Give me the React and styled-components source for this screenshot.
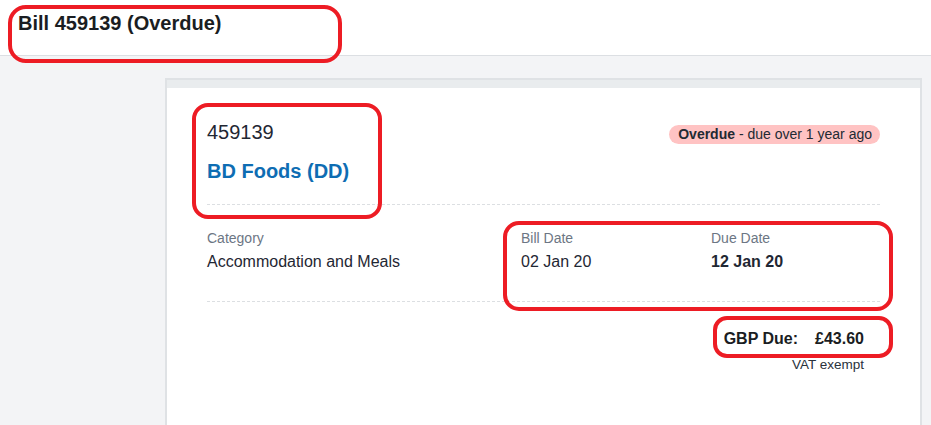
import React from "react";
import styled, { createGlobalStyle } from "styled-components";

const Global = createGlobalStyle`
  html, body { margin: 0; padding: 0; }
  body {
    background: #f3f4f6;
    font-family: "Liberation Sans", Arial, sans-serif;
    color: #1f2733;
  }
  * { box-sizing: border-box; }
`;

const Page = styled.div`
  position: relative;
  width: 931px;
  min-height: 425px;
  overflow: hidden;
`;

const Header = styled.header`
  height: 56px;
  background: #fff;
  border-bottom: 1px solid #dcdfe3;
  padding: 12px 18px 0;
`;

const Title = styled.h1`
  margin: 0;
  font-size: 20px;
  line-height: 23px;
  font-weight: 700;
  color: #1a1d22;
`;

const Main = styled.main`
  padding: 22px 9px 0 165px;
`;

const Card = styled.section`
  background: #fff;
  border: 2px solid #dfe2e5;
  border-bottom: none;
  min-height: 360px;
`;

const Band = styled.div`
  height: 8px;
  background: #e9ecee;
`;

const Body = styled.div`
  padding: 0 40px;
`;

const Section = styled.div`
  padding: ${(p) => p.$pad};
  border-bottom: ${(p) => (p.$dashed ? "1px dashed #dcdfe2" : "none")};
`;

const HeadRow = styled.div`
  display: flex;
  justify-content: space-between;
  align-items: flex-start;
`;

const Number = styled.div`
  font-size: 20px;
  line-height: 24px;
  color: #1f2733;
`;

const Supplier = styled.a`
  display: block;
  margin-top: 15px;
  font-size: 20px;
  line-height: 24px;
  font-weight: 700;
  color: #0e6db3;
  text-decoration: none;
`;

const Badge = styled.span`
  margin-top: 5px;
  display: inline-block;
  height: 19px;
  line-height: 19px;
  padding: 0 8px 0 9px;
  border-radius: 10px;
  background: #ffc3c3;
  font-size: 14px;
  color: #222a33;
  white-space: nowrap;
  b { font-weight: 700; }
`;

const Grid = styled.div`
  display: grid;
  grid-template-columns: 314px 190px 1fr;
`;

const Field = styled.div`
  display: flex;
  flex-direction: column;
  gap: 5px;
`;

const Label = styled.span`
  font-size: 14px;
  line-height: 17px;
  color: #6c7684;
`;

const Value = styled.span`
  font-size: 16px;
  line-height: 19px;
  font-weight: ${(p) => (p.$bold ? 700 : 400)};
  color: #1f2733;
`;

const Totals = styled.div`
  display: flex;
  flex-direction: column;
  align-items: flex-end;
  padding: 27px 16px 0 0;
`;

const DueLine = styled.div`
  font-size: 16px;
  line-height: 19px;
  font-weight: 700;
  color: #1a1d22;
  display: flex;
  gap: 17px;
`;

const Note = styled.div`
  margin-top: 8px;
  font-size: 13.5px;
  line-height: 17px;
  color: #2a323c;
`;

const Mark = styled.div`
  position: absolute;
  left: ${(p) => p.$x}px;
  top: ${(p) => p.$y}px;
  width: ${(p) => p.$w}px;
  height: ${(p) => p.$h}px;
  border: 4px solid #ed1c24;
  border-radius: ${(p) => p.$r || 16}px;
  pointer-events: none;
`;

export default function App() {
  return (
    <Page>
      <Global />
      <Header>
        <Title>Bill 459139 (Overdue)</Title>
      </Header>
      <Main>
        <Card>
          <Band />
          <Body>
            <Section $pad="32px 0 21px" $dashed>
              <HeadRow>
                <div>
                  <Number>459139</Number>
                  <Supplier href="#">BD Foods (DD)</Supplier>
                </div>
                <Badge>
                  <b>Overdue</b> - due over 1 year ago
                </Badge>
              </HeadRow>
            </Section>
            <Section $pad="25px 0 30px" $dashed>
              <Grid>
                <Field>
                  <Label>Category</Label>
                  <Value>Accommodation and Meals</Value>
                </Field>
                <Field>
                  <Label>Bill Date</Label>
                  <Value>02 Jan 20</Value>
                </Field>
                <Field>
                  <Label>Due Date</Label>
                  <Value $bold>12 Jan 20</Value>
                </Field>
              </Grid>
            </Section>
            <Totals>
              <DueLine>
                <span>GBP Due:</span>
                <span>£43.60</span>
              </DueLine>
              <Note>VAT exempt</Note>
            </Totals>
          </Body>
        </Card>
      </Main>
      <Mark $x={8} $y={5} $w={334} $h={58} $r={18} />
      <Mark $x={192} $y={103} $w={190} $h={116} />
      <Mark $x={503} $y={221} $w={390} $h={90} />
      <Mark $x={713} $y={316} $w={180} $h={42} $r={14} />
    </Page>
  );
}
